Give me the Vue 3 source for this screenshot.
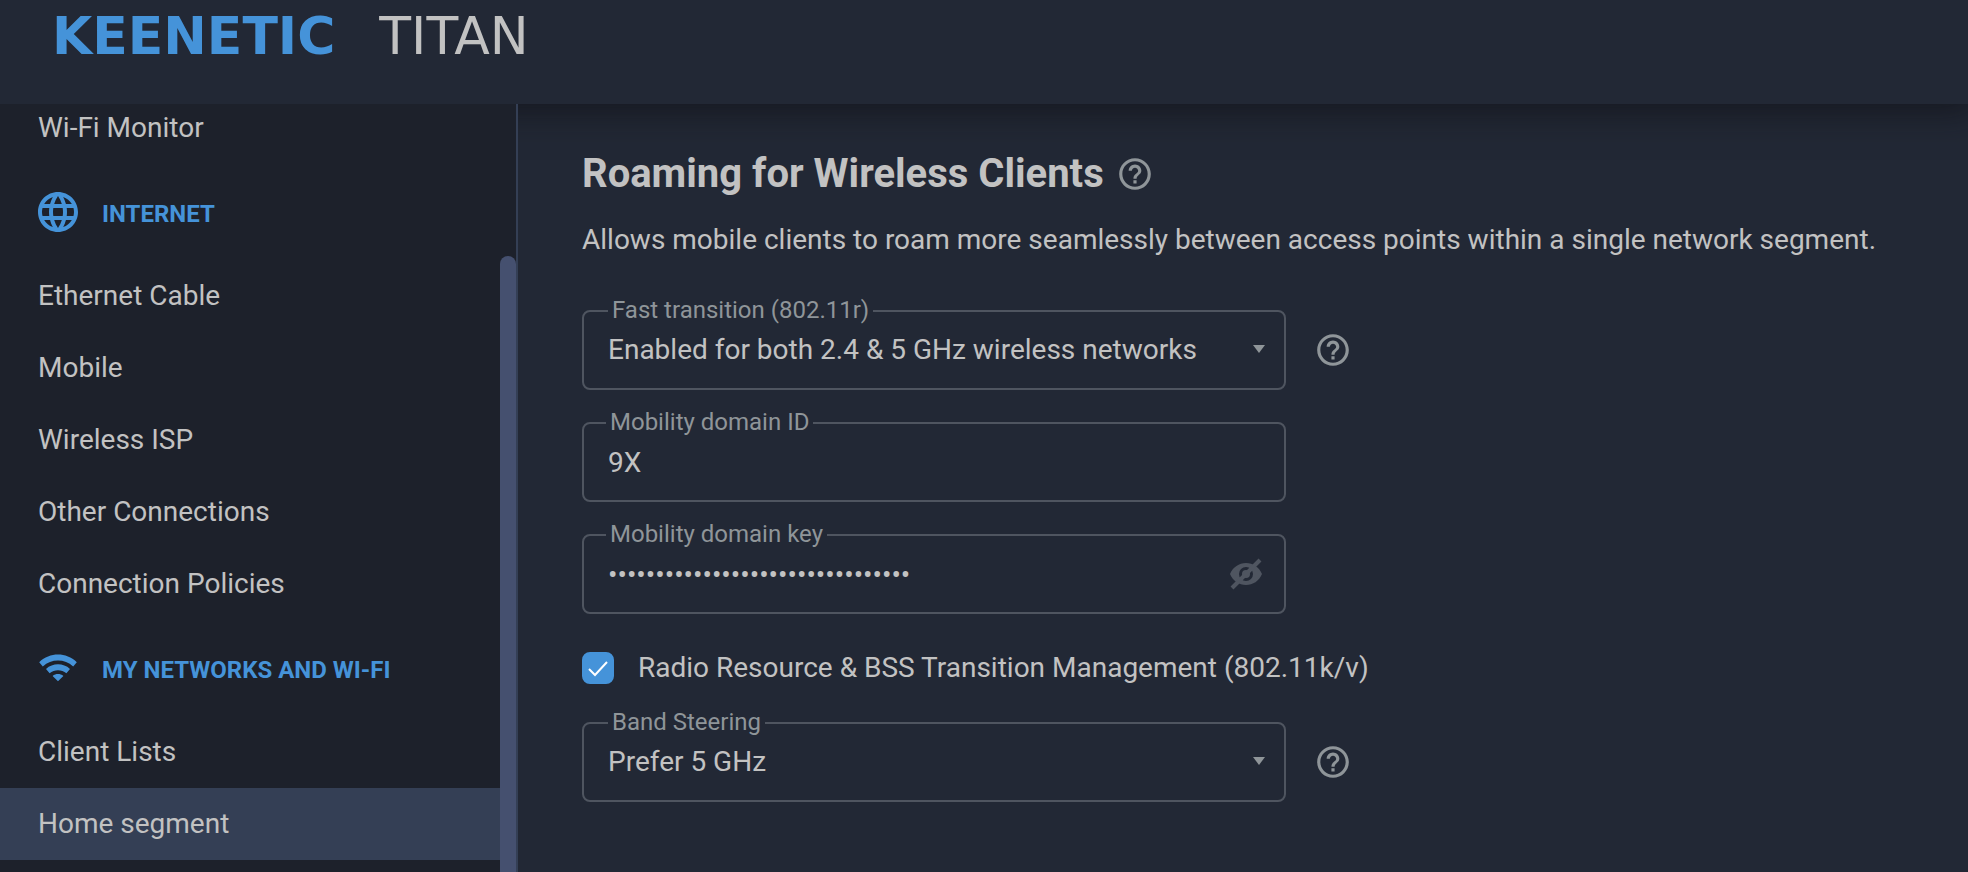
<template>
  <div class="app">
    <header class="topbar">
      <a class="brand" href="#">
        <span class="brand__name">KEENETIC</span>
        <span class="brand__model">TITAN</span>
      </a>
    </header>

    <div class="layout">
      <aside class="sidebar">
        <nav class="menu">
          <section v-for="group in menu" :key="group.title" class="menu__group">
            <h2 v-if="group.title" class="menu__title">
              <svg class="menu__icon" viewBox="0 0 24 24" aria-hidden="true">
                <path :d="icons[group.icon]" />
              </svg>
              <span class="menu__caption">{{ group.title }}</span>
            </h2>
            <a
              v-for="item in group.items"
              :key="item"
              href="#"
              :class="['menu__link', { 'menu__link--active': item === activeItem }]"
              @click.prevent="activeItem = item"
            >
              {{ item }}
            </a>
          </section>
        </nav>
        <div class="scrollbar" aria-hidden="true">
          <div class="scrollbar__thumb"></div>
        </div>
      </aside>

      <main class="content">
        <div class="heading">
          <h1 class="heading__title">Roaming for Wireless Clients</h1>
          <button type="button" class="help" aria-label="Help">
            <svg viewBox="0 0 24 24" aria-hidden="true"><path :d="icons.help" /></svg>
          </button>
        </div>
        <p class="description">
          Allows mobile clients to roam more seamlessly between access points within a single network segment.
        </p>

        <form class="form" @submit.prevent>
          <div class="row">
            <div class="field">
              <label class="field__label field__label--select" for="fast-transition">Fast transition (802.11r)</label>
              <select id="fast-transition" v-model="form.fastTransition" class="field__control field__control--select">
                <option v-for="option in transitionOptions" :key="option">{{ option }}</option>
              </select>
              <svg class="field__arrow" viewBox="0 0 12 8" aria-hidden="true"><path d="M0 0h12L6 8z" /></svg>
            </div>
            <button type="button" class="help" aria-label="Help">
              <svg viewBox="0 0 24 24" aria-hidden="true"><path :d="icons.help" /></svg>
            </button>
          </div>

          <div class="field">
            <label class="field__label" for="domain-id">Mobility domain ID</label>
            <input id="domain-id" v-model="form.domainId" class="field__control" type="text" />
          </div>

          <div class="field">
            <label class="field__label" for="domain-key">Mobility domain key</label>
            <input
              id="domain-key"
              v-model="form.domainKey"
              class="field__control"
              :type="showKey ? 'text' : 'password'"
            />
            <button type="button" class="field__toggle" aria-label="Show key" @click="showKey = !showKey">
              <svg viewBox="0 0 32 32" aria-hidden="true">
                <path
                  class="eye__shape"
                  fill-rule="evenodd"
                  d="M16 5C9 5 3 9 0 16c3 7 9 11 16 11s13-4 16-11C29 9 23 5 16 5zm0 4a7 7 0 1 1 0 14 7 7 0 0 1 0-14z"
                />
                <circle class="eye__shape" cx="16" cy="16" r="4" />
                <path class="eye__slash" d="M2 30L30 2" />
              </svg>
            </button>
          </div>

          <label class="check">
            <input v-model="form.radioResource" class="check__input" type="checkbox" />
            <svg class="check__mark" viewBox="0 0 32 32" aria-hidden="true"><path d="M7 17l6 6L25 10" /></svg>
            <span>Radio Resource &amp; BSS Transition Management (802.11k/v)</span>
          </label>

          <div class="row">
            <div class="field">
              <label class="field__label field__label--select" for="band-steering">Band Steering</label>
              <select id="band-steering" v-model="form.bandSteering" class="field__control field__control--select">
                <option v-for="option in steeringOptions" :key="option">{{ option }}</option>
              </select>
              <svg class="field__arrow" viewBox="0 0 12 8" aria-hidden="true"><path d="M0 0h12L6 8z" /></svg>
            </div>
            <button type="button" class="help" aria-label="Help">
              <svg viewBox="0 0 24 24" aria-hidden="true"><path :d="icons.help" /></svg>
            </button>
          </div>
        </form>
      </main>
    </div>
  </div>
</template>

<script setup>
import { reactive, ref } from 'vue';

const icons = {
  globe:
    'M11.99 2C6.47 2 2 6.48 2 12s4.47 10 9.99 10C17.52 22 22 17.52 22 12S17.52 2 11.99 2zm6.93 6h-2.95c-.32-1.25-.78-2.45-1.38-3.56 1.84.63 3.37 1.91 4.33 3.56zM12 4.04c.83 1.2 1.48 2.53 1.91 3.96h-3.82c.43-1.43 1.08-2.76 1.91-3.96zM4.26 14C4.1 13.36 4 12.69 4 12s.1-1.36.26-2h3.38c-.08.66-.14 1.32-.14 2s.06 1.34.14 2H4.26zm.82 2h2.95c.32 1.25.78 2.45 1.38 3.56-1.84-.63-3.37-1.9-4.33-3.56zm2.95-8H5.08c.96-1.66 2.49-2.93 4.33-3.56C8.81 5.55 8.35 6.75 8.03 8zM12 19.96c-.83-1.2-1.48-2.53-1.91-3.96h3.82c-.43 1.43-1.08 2.76-1.91 3.96zM14.34 14H9.66c-.09-.66-.16-1.32-.16-2s.07-1.35.16-2h4.68c.09.65.16 1.32.16 2s-.07 1.34-.16 2zm.25 5.56c.6-1.11 1.06-2.31 1.38-3.56h2.95c-.96 1.65-2.49 2.93-4.33 3.56zM16.36 14c.08-.66.14-1.32.14-2s-.06-1.34-.14-2h3.38c.16.64.26 1.31.26 2s-.1 1.36-.26 2h-3.38z',
  wifi:
    'M2.6 9.1C7.9 4 16.1 4 21.4 9.1L19.6 11.2C15.3 7.3 8.7 7.3 4.4 11.2zM6 12.5C9.4 9.4 14.6 9.4 18 12.5L16.2 14.6C13.8 12.6 10.2 12.6 7.8 14.6zM9.3 16C10.9 14.7 13.1 14.7 14.7 16L12 18.6z',
  help:
    'M11 18h2v-2h-2v2zm1-16C6.48 2 2 6.48 2 12s4.48 10 10 10 10-4.48 10-10S17.52 2 12 2zm0 18c-4.41 0-8-3.59-8-8s3.59-8 8-8 8 3.59 8 8-3.59 8-8 8zm0-14c-2.21 0-4 1.79-4 4h2c0-1.1.9-2 2-2s2 .9 2 2c0 2-3 1.75-3 5h2c0-2.25 3-2.5 3-5 0-2.21-1.79-4-4-4z',
};

const menu = [
  { title: '', items: ['Wi-Fi Monitor'] },
  {
    title: 'INTERNET',
    icon: 'globe',
    items: ['Ethernet Cable', 'Mobile', 'Wireless ISP', 'Other Connections', 'Connection Policies'],
  },
  { title: 'MY NETWORKS AND WI-FI', icon: 'wifi', items: ['Client Lists', 'Home segment'] },
];

const transitionOptions = ['Enabled for both 2.4 & 5 GHz wireless networks', 'Disabled'];
const steeringOptions = ['Prefer 5 GHz', 'Prefer 2.4 GHz', 'Disabled'];

const activeItem = ref('Home segment');
const showKey = ref(false);

const form = reactive({
  fastTransition: transitionOptions[0],
  domainId: '9X',
  domainKey: 'k'.repeat(32),
  radioResource: true,
  bandSteering: steeringOptions[0],
});
</script>

<style>
body {
  background: #222835;
}
</style>

<style scoped>
.app {
  display: flex;
  flex-direction: column;
  height: 100vh;
  overflow: hidden;
  background: #222835;
  color: #c2c2c2;
  font-family: Roboto, 'Liberation Sans', sans-serif;
  font-size: 28px;
  line-height: 36px;
}

.app *,
.app *::before {
  box-sizing: border-box;
}

.topbar {
  flex: none;
  height: 104px;
  padding: 8px 52px;
  box-shadow: 0 0 32px 8px rgba(14, 14, 18, 0.6);
}

.brand {
  display: flex;
  gap: 44px;
  color: #c2c2c2;
  font-family: 'DejaVu Sans', sans-serif;
  font-size: 52px;
  line-height: 56px;
  text-decoration: none;
}

.brand__name {
  color: #4593d9;
  font-weight: 700;
}

.brand__model {
  font-weight: 400;
}

.layout {
  display: flex;
  flex: 1;
  min-height: 0;
}

.sidebar {
  position: relative;
  display: flex;
  flex: none;
  width: 518px;
  overflow: hidden;
  border-right: 2px solid #343f55;
  background: #1d212b;
}

.menu {
  flex: 1;
  margin-top: -12px;
}

.menu__title {
  display: flex;
  align-items: center;
  gap: 20px;
  height: 96px;
  margin: 0;
  padding: 0 34px;
  color: #4593d9;
  font-size: 24px;
  font-weight: 700;
  line-height: 28px;
}

.menu__icon {
  width: 48px;
  height: 48px;
  fill: currentColor;
}

.menu__caption {
  padding-top: 4px;
}

.menu__link {
  display: block;
  padding: 18px 38px;
  color: #c2c2c2;
  text-decoration: none;
}

.menu__link--active {
  background: #343f55;
}

.scrollbar {
  flex: none;
  width: 16px;
  padding-top: 152px;
}

.scrollbar__thumb {
  height: 100%;
  border-radius: 8px 8px 0 0;
  background: #45506f;
}

.content {
  flex: 1;
  min-width: 0;
  padding: 44px 64px;
}

.heading {
  display: flex;
  align-items: center;
  gap: 12px;
}

.heading__title {
  margin: 0;
  font-size: 40px;
  font-weight: 700;
  line-height: 52px;
}

.description {
  margin: 22px 0 52px;
}

.form {
  display: flex;
  flex-direction: column;
  gap: 32px;
}

.row {
  display: flex;
  align-items: center;
  gap: 28px;
}

.field {
  position: relative;
  width: 100%;
  max-width: 704px;
}

.field__label {
  position: absolute;
  top: -16px;
  left: 24px;
  padding: 0 4px;
  background: #222835;
  color: #8f9599;
  font-size: 24px;
  line-height: 32px;
}

.field__label--select {
  left: 26px;
}

.field__control {
  display: block;
  width: 100%;
  height: 80px;
  padding: 0 24px;
  border: 2px solid #4f5560;
  border-radius: 8px;
  outline: none;
  background: transparent;
  color: #c2c2c2;
  font: inherit;
  appearance: none;
}

.field__control:focus {
  border-color: #4593d9;
}

.field__control--select {
  padding-right: 64px;
}

.field__arrow {
  position: absolute;
  top: 35px;
  right: 21px;
  width: 12px;
  height: 8px;
  fill: #8f9599;
  pointer-events: none;
}

.field__toggle {
  position: absolute;
  top: 24px;
  right: 24px;
  width: 32px;
  height: 32px;
  padding: 0;
  border: none;
  background: none;
  cursor: pointer;
}

.field__toggle svg {
  display: block;
}

.eye__shape {
  fill: #4f5560;
}

.eye__slash {
  stroke: #4f5560;
  stroke-width: 4;
}

.help {
  flex: none;
  width: 38px;
  height: 38px;
  padding: 0;
  border: none;
  background: none;
  color: #8f9599;
  cursor: pointer;
}

.help svg {
  display: block;
  fill: currentColor;
}

.check {
  position: relative;
  display: flex;
  align-items: center;
  gap: 24px;
  margin: 4px 0;
}

.check__input {
  flex: none;
  width: 32px;
  height: 32px;
  margin: 0;
  border: 2px solid #4f5560;
  border-radius: 8px;
  appearance: none;
}

.check__input:checked {
  border-color: #4593d9;
  background: #4593d9;
}

.check__mark {
  position: absolute;
  left: 0;
  width: 32px;
  height: 32px;
  fill: none;
  stroke: #ffffff;
  stroke-width: 2;
  pointer-events: none;
}

.check__input:not(:checked) + .check__mark {
  display: none;
}
</style>
